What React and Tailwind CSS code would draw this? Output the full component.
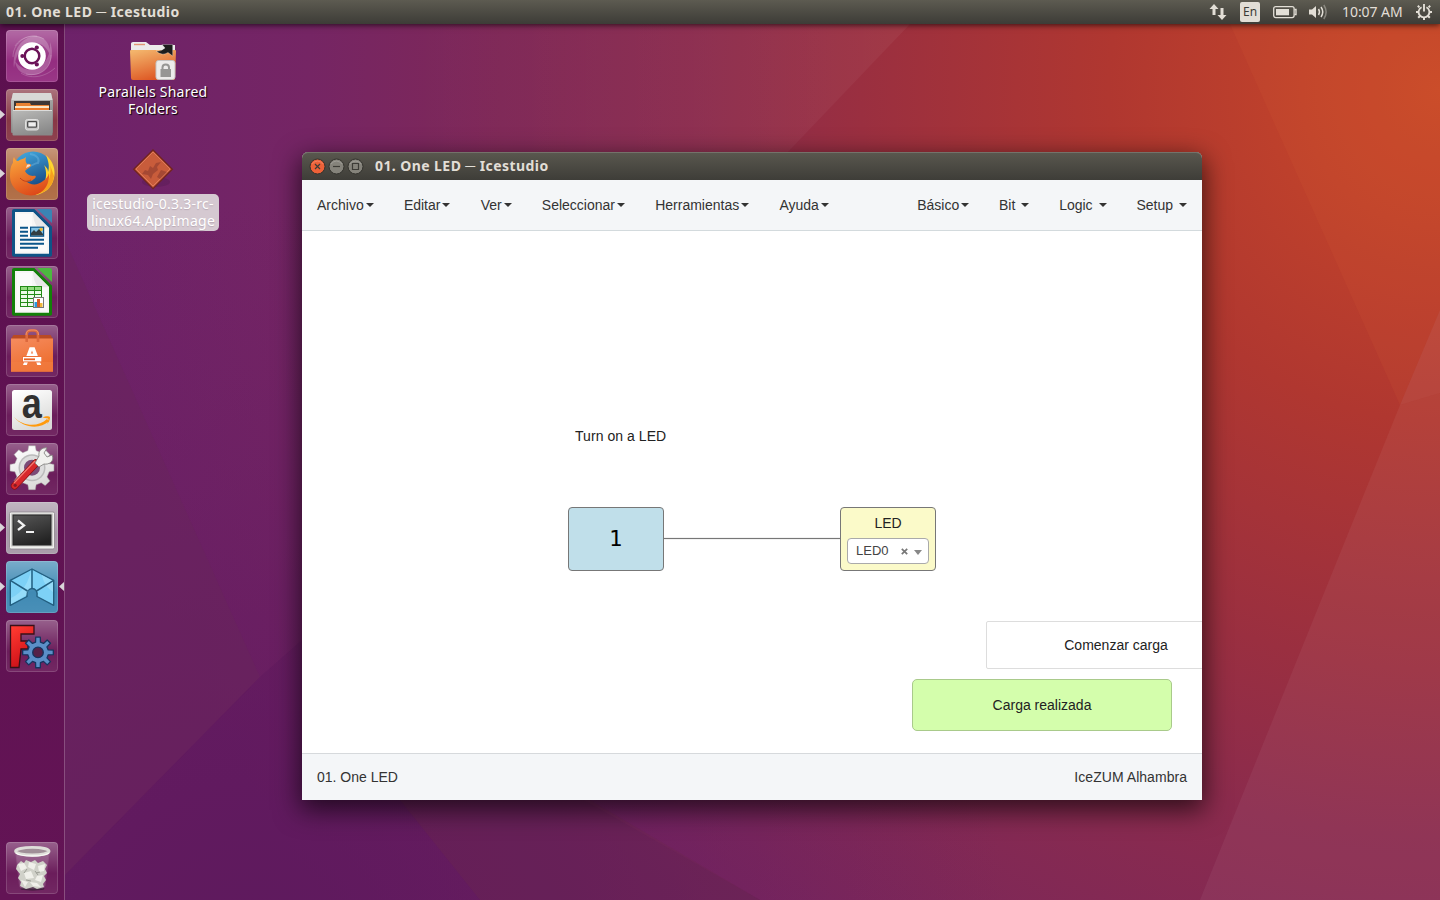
import React from "react";

const gearPath = (cx, cy, outer, inner, teeth) => {
  const points = [];
  const step = (Math.PI * 2) / teeth;
  for (let i = 0; i < teeth; i++) {
    const a = i * step - Math.PI / 2;
    [[-0.3, inner], [-0.19, outer], [0.19, outer], [0.3, inner]].forEach(([o, r]) => {
      points.push(`${(cx + r * Math.cos(a + o * step)).toFixed(2)},${(cy + r * Math.sin(a + o * step)).toFixed(2)}`);
    });
  }
  return `M${points.join("L")}Z`;
};

function Wallpaper() {
  return (
    <svg className="absolute inset-0" width="1440" height="900" viewBox="0 0 1440 900">
      <defs>
        <radialGradient id="warm" gradientUnits="userSpaceOnUse" cx="1440" cy="90" r="1380">
          <stop offset="0" stopColor="#c94a29" />
          <stop offset="0.1" stopColor="#c0422b" />
          <stop offset="0.24" stopColor="#b03730" />
          <stop offset="0.42" stopColor="#9a2f40" />
          <stop offset="0.54" stopColor="#8b2b4d" />
          <stop offset="0.68" stopColor="#7f2857" />
          <stop offset="0.82" stopColor="#752564" />
          <stop offset="1" stopColor="#6d226a" />
        </radialGradient>
        <radialGradient id="low" gradientUnits="userSpaceOnUse" cx="250" cy="960" r="760">
          <stop offset="0" stopColor="#5f195b" stopOpacity="0.75" />
          <stop offset="0.45" stopColor="#641b5c" stopOpacity="0.5" />
          <stop offset="1" stopColor="#6a1f5c" stopOpacity="0" />
        </radialGradient>
        <linearGradient id="fade" x1="0" y1="0" x2="1" y2="0">
          <stop offset="0" stopColor="#fff" stopOpacity="0" />
          <stop offset="1" stopColor="#fff" stopOpacity="0.045" />
        </linearGradient>
      </defs>
      <rect width="1440" height="900" fill="url(#warm)" />
      <rect width="1440" height="900" fill="url(#low)" />
      <path d="M65 240L260 677L65 875Z" fill="#68255a" opacity="0.45" />
      <path d="M260 677L65 875V900H760L302 640Z" fill="#4a0f55" opacity="0.14" />
      <path d="M590 800L760 900H480L400 800Z" fill="#6c2a48" opacity="0.28" />
      <path d="M910 24L680 265H400V24Z" fill="url(#fade)" />
      <path d="M1230 24L1400 405L1440 310V24Z" fill="#e4703a" opacity="0.1" />
      <path d="M1440 310L1400 405L1440 393Z" fill="#fff" opacity="0.07" />
      <path d="M1400 405L1200 900H1440V393Z" fill="#fff" opacity="0.05" />
    </svg>
  );
}

function UbuntuIcon() {
  return (
    <g>
      <path d="M8 38C6 20 16 7 29 6C40 6 45 16 44 26C41 15 32 12 25 13C14 15 10 26 8 38ZM44 12C50 28 42 43 28 45C18 46 10 41 9 31C15 40 24 41 31 38C40 34 45 24 44 12Z" fill="#fff" opacity="0.22" />
      <path d="M7 27C7 14 18 5 31 6M45 25C45 38 35 47 20 44M15 43C24 49 38 48 49 38M38 9C27 3 15 7 9 16" fill="none" stroke="#fff" strokeWidth="0.7" opacity="0.28" />
      <circle cx="26" cy="26" r="13.8" fill="#fff" />
      <circle cx="26" cy="26" r="7.2" fill="none" stroke="#6b1358" strokeWidth="2.7" />
      <path d="M18 26H14M30 19L32 15.7M30 33L32 36.3" stroke="#fff" strokeWidth="6" />
      <circle cx="26" cy="26" r="5.8" fill="#fff" />
      <circle cx="16.4" cy="26" r="2.1" fill="#6b1358" />
      <circle cx="30.8" cy="17.6" r="2.1" fill="#6b1358" />
      <circle cx="30.8" cy="34.4" r="2.1" fill="#6b1358" />
    </g>
  );
}

function FilesIcon() {
  return (
    <g>
      <path d="M7 4H45L47 12V43Q47 44 46 44H6Q5 44 5 43V12Z" fill="url(#metal)" />
      <path d="M7 4H45L46.5 11H5.5Z" fill="#d8d8d6" />
      <rect x="8" y="12" width="36" height="10" fill="#3d3735" />
      <path d="M10 14H24L25 16H43V23H10Z" fill="#e98232" />
      <path d="M9 17H43V20H9Z" fill="#fbe6c5" />
      <path d="M9 19H43V23H9Z" fill="#ec7c2b" />
      <rect x="6.5" y="21" width="40" height="25.5" rx="1" fill="url(#metal2)" />
      <path d="M7 21.5H46" stroke="#dcdcdb" />
      <rect x="19.5" y="30.5" width="13" height="10.5" rx="2" fill="#c6c6c5" stroke="#e0e0df" />
      <rect x="21.7" y="32.7" width="8.8" height="5.4" rx="0.7" fill="#eee" stroke="#4c4c4c" strokeWidth="1.3" />
    </g>
  );
}

function FirefoxIcon() {
  return (
    <g>
      <circle cx="27" cy="24" r="20.5" fill="url(#globe)" />
      <path d="M24 6C31 7 34 11 32 15C28 15 27 18 23 18" fill="none" stroke="#76bce7" strokeWidth="2" opacity="0.4" />
      <path d="M40 7C47 13 50 22 48 30C46 40 38 46 29 47C34 43 38 39 39 33C41 27 40 21 38 17C41 20 42 21 42 24C44 18 42 12 40 7Z" fill="#ffd52e" />
      <path d="M44 17C46 25 43 35 37 41L30 46C40 45 47 38 48 28Z" fill="#f6a01e" />
      <path d="M8 9C9 12 11 13 12 13C15 11 18 11 20 9C19 13 20 14 21 16C24 15 26 17 25 18C24 20 20 21 19 23C20 25 23 28 27 28C30 27 31 29 28 31C25 34 22 34 20 33C24 37 31 38 37 33C40 31 42 29 43 25C44 37 37 47 25 47.5C13 47 4 39 4 28C4 21 5 17 7 15C7 12 7 11 8 9Z" fill="url(#fox)" />
      <path d="M14 30C18 34 21 34 25 32" fill="none" stroke="#bf421b" strokeWidth="1" />
      <path d="M21 17C23 16 25 17 24 18L20 20Z" fill="#f9dfcd" />
    </g>
  );
}

function DocumentShape({ dark, light }) {
  return (
    <g>
      <path d="M8 2H28.3L46 19.7V48Q46 49.7 44 49.7H8Q6 49.7 6 48V4Q6 2 8 2Z" fill={dark} />
      <path d="M31 2H44Q46 2 46 4V16Z" fill={light} />
      <path d="M9 5H27L43 21V46.7H9Z" fill="#f6f6f5" />
      <path d="M11 7H26V22H41V44.7H11Z" fill="#fff" opacity="0.5" />
      <path d="M27 5L43 21H32Q27 15 27 5Z" fill="#e8e8e8" />
    </g>
  );
}

function WriterIcon() {
  return (
    <g>
      <DocumentShape dark="#0e5487" light="#3a84b4" />
      <path d="M14 20.7H22M14 24.7H22M14 28.7H22M14 32.7H38M14 36.7H38M14 40.7H32" stroke="#0b568a" strokeWidth="2" />
      <rect x="24.6" y="20.2" width="13" height="9" fill="#83c3e5" stroke="#0b568a" strokeWidth="1.2" />
      <circle cx="35" cy="22.5" r="1.8" fill="#f1bd35" />
      <path d="M25 28.6V26L28 23L30 25L33 22L37 27V28.6Z" fill="#333e42" />
    </g>
  );
}

function CalcIcon() {
  return (
    <g>
      <DocumentShape dark="#138009" light="#4cb83f" />
      <rect x="14" y="20" width="22" height="21" fill="#238b17" />
      <path d="M15 21H21V24H15ZM22 21H28V24H22ZM29 21H35V24H29Z" fill="#94dc80" />
      <path d="M15 25H21V28H15ZM22 25H28V28H22ZM29 25H35V28H29ZM15 29H21V32H15ZM22 29H28V32H22ZM29 29H35V32H29ZM15 33H21V36H15ZM22 33H28V36H22ZM15 37H21V40H15ZM22 37H28V40H22Z" fill="#edfbe9" />
      <rect x="27.5" y="31.5" width="10" height="10" fill="#fff" stroke="#777" />
      <path d="M28.5 36H31V41H28.5Z" fill="#2999de" />
      <path d="M31 33H34V41H31Z" fill="#d65a25" />
      <path d="M34 37H36.5V41H34Z" fill="#f0b83b" />
    </g>
  );
}

function SoftwareIcon() {
  return (
    <g>
      <path d="M5 14L7.5 10H44.5L47 14Z" fill="#b94a24" />
      <path d="M5 13.5H47V46.7H5Z" fill="url(#bag)" />
      <path d="M5 37H47V46.7H5Z" fill="#f28046" opacity="0.55" />
      <path d="M20.7 17V10Q20.7 5.5 25 5.5H28Q32 5.5 32 10V17" fill="none" stroke="#dd693d" strokeWidth="2.6" />
      <path d="M20 10Q20 5 25 5H28Q32.5 5 32.5 10" fill="none" stroke="#f49a72" strokeWidth="0.8" />
      <path d="M23.6 22.3H28.6L35.2 40H31.3L26 25.4L20.8 40H17Z" fill="#fff" />
      <path d="M16 31H36V37.4H16Z" fill="#ee7138" />
      <path d="M17 32H35.3V36.4H17Z" fill="#fff" />
      <path d="M18 33.4H29V35.2H18Z" fill="#e76328" />
      <path d="M23 28.5H29V31H22.2Z" fill="#fff" />
    </g>
  );
}

function AmazonIcon() {
  return (
    <g>
      <rect x="6" y="6" width="40" height="40" rx="2.5" fill="url(#paper)" />
      <text transform="translate(25.8 34) scale(0.84 1)" textAnchor="middle" fontSize="43" fontWeight="700" fontFamily="Liberation Sans, Arial, sans-serif" fill="#303030">a</text>
      <path d="M8 33C17 43 33 43 41 35L43 37C34 46 17 44 8 33Z" fill="#ff9a0b" />
      <path d="M36.5 33.5C40 31.5 43 32 44 33C44 36 43 38 41 40C42 37 43 35 42 34.5C40 34 38 34 36.5 33.5Z" fill="#ff9a0b" />
    </g>
  );
}

function SettingsIcon() {
  return (
    <g>
      <path d={gearPath(26, 24.7, 22.2, 17.6, 8)} fill="url(#paper)" stroke="#a7a7a5" strokeWidth="0.5" />
      <circle cx="26" cy="24.7" r="13.5" fill="#bbb" />
      <circle cx="26" cy="24.7" r="12" fill="#ddd" />
      <circle cx="26" cy="24.7" r="8" fill="#7b4b77" />
      <path d="M8.7 42.8L30 20" stroke="#8b0d12" strokeWidth="7.4" strokeLinecap="round" />
      <path d="M8.7 42.8L30 20" stroke="#d8282c" strokeWidth="6" strokeLinecap="round" />
      <path d="M8 40L29 18" stroke="#f27a73" strokeWidth="1.2" />
      <circle cx="9.2" cy="42.3" r="1.6" fill="#871b23" />
      <path d="M29 20L33 13C32 8 36 4 41 5L38 10L41 14L46 12C49 18 43 22 38 21L33 24Z" fill="#f1f1ee" stroke="#878783" strokeWidth="0.9" />
    </g>
  );
}

function TerminalIcon() {
  return (
    <g>
      <rect x="3.5" y="10" width="45" height="37" rx="1.5" fill="#f0f0ee" stroke="#8b858a" strokeWidth="0.8" />
      <rect x="5" y="11.5" width="42" height="33" fill="#cbcbc8" />
      <rect x="7" y="13" width="38" height="30" fill="url(#screen)" stroke="#252525" />
      <path d="M12 18.5L18 23.4L12 28" fill="none" stroke="#f2f2f2" strokeWidth="2.3" />
      <path d="M20 30H28" stroke="#f2f2f2" strokeWidth="2" />
    </g>
  );
}

function IcestudioIcon() {
  return (
    <g strokeLinejoin="round">
      <path d="M26 8L47.7 19.3V44.3L31 35.5C32 30 29 27.5 26 27.5C23 27.5 20 30 21 35.5L4.3 44.3V19.3Z" fill="#7dd1f6" stroke="#235f80" strokeWidth="1.4" />
      <path d="M25 9V27C22 28 21 31 20.5 34L5 43V37C17 32 23 20 25 9ZM36 14L47 20V31C40 26 37 20 36 14Z" fill="#a5e2fc" opacity="0.6" />
      <path d="M26 8V27.5M4.3 19.3L21.5 30M47.7 19.3L30.5 30" fill="none" stroke="#235f80" strokeWidth="1.5" />
    </g>
  );
}

function FreecadIcon() {
  return (
    <g>
      <path d="M4.5 5.5H28V14H15V21H22V29H15L13 47.5H4.5Z" fill="url(#red)" stroke="#381019" strokeWidth="1.3" />
      <path d={gearPath(32, 32.4, 15.5, 10.5, 8)} fill="#5b8fc8" stroke="#16345f" strokeWidth="1.3" strokeLinejoin="round" />
      <circle cx="32" cy="32.4" r="5.3" fill="#552148" stroke="#16345f" strokeWidth="1.3" />
    </g>
  );
}

function TrashIcon() {
  return (
    <g>
      <ellipse cx="26.5" cy="46.8" rx="12" ry="1.7" fill="#2e162c" opacity="0.8" />
      <path d="M10 12H43L39 44Q38 47 34 47H18Q14 47 13.5 44Z" fill="#fff" opacity="0.16" stroke="#e3cde1" strokeWidth="0.8" />
      <path d="M11 23L15 19L18 21L20 18L25 20L29 18L32 21L37 19L41 23L39 27L41 31L38 34L40 38L37 42L38 45L31 47L27 45L20 47L14 44L15 40L12 36L14 32L10 27Z" fill="#d0d1c9" />
      <path d="M12 22L18 21L21 26L15 29ZM23 20L30 22L28 28L22 25ZM32 24L39 22L38 29L33 30ZM18 31L25 29L28 36L20 37ZM31 34L37 33L35 40L29 38ZM15 38L22 40L19 45ZM24 40L31 41L35 45L27 44Z" fill="#f0f0ea" />
      <path d="M21 27L18 31M29 29L32 33M20 38L25 39M34 30L30 31" stroke="#9c9e95" />
      <ellipse cx="26.3" cy="9.2" rx="16.7" ry="3.8" fill="#a08f98" stroke="#deded9" strokeWidth="2.9" />
      <path d="M10 11C15 15 37 15 43 11" fill="none" stroke="#f8f8f5" strokeWidth="1.3" />
    </g>
  );
}

const launcher = [
  { name: "ubuntu", Icon: UbuntuIcon, tile: "bg-[#942d80]" },
  { name: "files", Icon: FilesIcon, tile: "bg-[#883846]", running: true },
  { name: "firefox", Icon: FirefoxIcon, tile: "bg-[#ae6a41]", running: true },
  { name: "writer", Icon: WriterIcon, tile: "bg-[#6b1d5b]" },
  { name: "calc", Icon: CalcIcon, tile: "bg-[#6b1d5b]" },
  { name: "software", Icon: SoftwareIcon, tile: "bg-[#6b1d5b]" },
  { name: "amazon", Icon: AmazonIcon, tile: "bg-[#6b1d5b]" },
  { name: "settings", Icon: SettingsIcon, tile: "bg-[#6b1d5b]" },
  { name: "terminal", Icon: TerminalIcon, tile: "bg-[#a698a7]", running: true },
  { name: "icestudio", Icon: IcestudioIcon, tile: "bg-[#408ab4]", running: true, focused: true },
  { name: "freecad", Icon: FreecadIcon, tile: "bg-[#6b1d5b]" },
];

function SharedGradients() {
  const pairs = [
    ["metal", "#c4c4c2", "#777"],
    ["metal2", "#b7b7b5", "#888"],
    ["globe", "#42a9df", "#123d79"],
    ["fox", "#f9a33b", "#dd4819"],
    ["bag", "#f58a5c", "#ed6c2b"],
    ["paper", "#fff", "#d9d9d7"],
    ["screen", "#555", "#222"],
    ["red", "#ff3a31", "#c90d16"],
    ["folder", "#f3b46b", "#dd5421"],
  ];
  return (
    <svg className="absolute" width="0" height="0">
      <defs>
        {pairs.map(([id, from, to]) => (
          <linearGradient key={id} id={id} x1="0.2" y1="0" x2="0.6" y2="1">
            <stop stopColor={from} />
            <stop offset="1" stopColor={to} />
          </linearGradient>
        ))}
      </defs>
    </svg>
  );
}

function Tile({ Icon, tile, running, focused }) {
  return (
    <div className="relative flex w-full justify-center pr-px">
      {running && <svg className="absolute top-[21px] left-0" width="5" height="9"><path d="M0 0L5 4.5L0 9Z" fill="#d9d4d8" /></svg>}
      <div className={`h-[52px] w-[52px] rounded-[4px] bg-linear-to-b from-white/30 via-transparent via-60% to-white/5 shadow-[inset_0_0_0_1px_rgba(255,255,255,0.15)] ${tile}`}>
        <svg className="overflow-visible" width="52" height="52" viewBox="0 0 52 52"><Icon /></svg>
      </div>
      {focused && <svg className="absolute top-[21px] right-0" width="6" height="9"><path d="M6 0L1 4.5L6 9Z" fill="#d9d4d8" /></svg>}
    </div>
  );
}

function TopBar() {
  return (
    <header className="relative z-10 flex h-6 items-center justify-between bg-linear-to-b from-[#5d5b51] to-[#3d3c37] text-[#e2ded6] shadow-[0_1px_6px_rgba(0,0,0,0.7)]">
      <span className="pl-1.5 font-['Noto_Sans',sans-serif] text-[14px] leading-6 font-bold whitespace-nowrap tracking-[0.42px]">01. One LED ─ Icestudio</span>
      <div className="flex h-6 items-center pr-[7px]">
        <svg width="18" height="18" viewBox="0 0 18 18" fill="#e2ded6"><path d="M5 1L9.5 6H6.5V12H3.5V6H.5ZM13 17L8.5 12H11.5V5H14.5V12H17.5Z" /></svg>
        <span className="ml-[13px] flex h-5 w-5 items-center justify-center rounded-[2px] bg-[#e2ded6] font-['Noto_Sans',sans-serif] text-[12px] text-[#3d3c37]">En</span>
        <svg className="ml-[13px]" width="24" height="14" viewBox="0 0 24 14"><rect x=".7" y="1.6" width="20.4" height="11" rx="2" fill="none" stroke="#e2ded6" strokeWidth="1.3" /><path d="M3 4H16V10.3H3Z" fill="#e2ded6" /><path d="M21.5 4.5H23V9.5H21.5" fill="none" stroke="#e2ded6" strokeWidth="1.4" /></svg>
        <svg className="ml-3" width="20" height="18" viewBox="0 0 20 18" fill="none" stroke="#e2ded6" strokeWidth="1.5"><path d="M0 6.5H3L7 3V15L3 11.5H0Z" fill="#e2ded6" stroke="none" /><path d="M9.5 6Q11.5 9 9.5 12" /><path d="M12 4Q15.5 9 12 14" /><path d="M14.8 2Q19.5 9 14.8 16" opacity="0.4" /></svg>
        <span className="ml-[13px] w-[62px] font-['Noto_Sans',sans-serif] text-[14px] leading-6 whitespace-nowrap tracking-[-0.05px]">10:07 AM</span>
        <svg className="ml-[11px]" width="18" height="18" viewBox="0 0 18 18" fill="none" stroke="#e2ded6"><path d="M6.6 4.2A5.4 5.4 0 1 0 11.4 4.2" strokeWidth="1.8" /><path d="M9 1V8.5" strokeWidth="1.9" /><path d="M4.4 4.4L2.8 2.8M13.6 4.4L15.2 2.8M3.5 9H1M14.5 9H17M5 13L3.2 14.8M13 13L14.8 14.8M9 14.5V17" strokeWidth="2" /></svg>
      </div>
    </header>
  );
}

function Launcher() {
  return (
    <nav className="flex w-[65px] flex-col justify-between border-r border-white/25 bg-linear-to-b from-[#5c104f] to-[#631455] pt-1.5 pb-1.5">
      <div className="flex flex-col gap-[7px]">
        {launcher.map((item) => <Tile key={item.name} {...item} />)}
      </div>
      <Tile Icon={TrashIcon} tile="bg-[#6b1d5b]" />
    </nav>
  );
}

function DesktopIcons() {
  return (
    <div className="flex w-[132px] flex-col items-center pt-[18px] text-center font-['Noto_Sans',sans-serif] text-[14px] leading-[17px] text-white">
      <svg className="ml-0.5" width="48" height="39" viewBox="0 0 48 39">
        <path d="M1 1.5Q1 0 3 0H16L20 3H45V20H1Z" fill="#ecebea" />
        <path d="M4 2.5H15" stroke="#e29573" strokeWidth="1.4" />
        <path d="M0 9Q0 8 1 8H45Q46 8 46 9L45 37Q45 38 43 38H3Q1 38 1 36Z" fill="url(#folder)" />
        <path d="M26 9Q32 14.5 38 10.5L42.7 14V2.5H32L35 6Q31 10 26 9Z" fill="#1d1d1d" stroke="#fff" strokeOpacity="0.5" strokeWidth="0.6" />
        <rect x="26" y="18.5" width="19" height="19" rx="2.5" fill="#ecebea" stroke="#c4c3c2" />
        <path d="M30.5 27H41V35H30.5Z" fill="#969694" />
        <path d="M32.5 28V25.5Q32.5 22.5 35.7 22.5Q39 22.5 39 25.5V28" fill="none" stroke="#969694" strokeWidth="2" />
      </svg>
      <div className="mt-[2px] tracking-[0.25px] whitespace-nowrap [text-shadow:1px_1px_1px_#000]">Parallels Shared<br />Folders</div>
      <svg className="mt-[31px]" width="44" height="44" viewBox="0 0 44 44">
        <ellipse cx="25" cy="34" rx="14" ry="5" fill="#35103a" opacity="0.18" />
        <path d="M22 2L41.3 21.3L22 40.6L2.7 21.3Z" fill="#c85c3b" stroke="#70241e" strokeWidth="1.3" />
        <path d="M22 4L39 21L22 38L5 21Z" fill="none" stroke="#e4835f" strokeWidth="0.8" />
        <path d="M11 26L14 22L17 23L19 18L22 20L25 15L30 14L26 19L27 22L22 26L20 31L17 27ZM26 29L30 22L36 24L29 31Z" fill="#923d30" opacity="0.65" />
      </svg>
      <div className="mt-[2px] h-[37px] w-[132px] rounded-[5px] bg-[#d5c9d1] pt-[1px] tracking-[0.26px] whitespace-nowrap [text-shadow:0_1px_1px_#b9aab5]">icestudio-0.3.3-rc-<br />linux64.AppImage</div>
    </div>
  );
}

function Caret({ spaced }) {
  return (
    <svg className={spaced ? "ml-1.5" : "ml-0.5"} width="8" height="4"><path d="M0 0H8L4 4Z" fill="#333" /></svg>
  );
}

function Menu({ items, spaced }) {
  return items.map((label) => (
    <span key={label} className="flex items-center whitespace-nowrap">
      {label}
      <Caret spaced={spaced && label !== "Básico"} />
    </span>
  ));
}

function WindowButton({ close, d }) {
  return (
    <svg width="17" height="17" viewBox="0 0 17 17">
      <circle cx="8.5" cy="8.5" r="7.5" fill={close ? "#ed6138" : "#85837b"} stroke="#33322d" strokeWidth="1" />
      <path d="M3 6Q8.5 0 14 6" fill="none" stroke="#fff" opacity="0.2" />
      <path d={d} fill="none" stroke="#3d3c37" strokeWidth="1.2" />
    </svg>
  );
}

function AppWindow() {
  return (
    <main className="absolute top-[128px] left-[237px] flex h-[648px] w-[900px] flex-col rounded-t-[6px] bg-white font-['Liberation_Sans',Arial,sans-serif] text-[14px] text-[#333] shadow-[0_8px_26px_2px_rgba(0,0,0,0.65)]">
      <div className="flex h-7 shrink-0 items-center rounded-t-[6px] bg-linear-to-b from-[#5a584f] to-[#3e3d38] pl-[7px] shadow-[inset_0_1px_0_#74726a]">
        <div className="flex gap-0.5">
          <WindowButton close d="M6 6L11 11M11 6L6 11" />
          <WindowButton d="M5 8.5H12" />
          <WindowButton d="M5.5 5.5H11.5V11.5H5.5Z" />
        </div>
        <span className="ml-[11px] font-['Noto_Sans',sans-serif] text-[14px] leading-7 font-bold tracking-[0.42px] whitespace-nowrap text-[#e2ded6]">01. One LED ─ Icestudio</span>
      </div>
      <div className="flex h-[51px] shrink-0 items-center justify-between border-b border-[#d3dadd] bg-[#f4f6f8] px-[15px]">
        <div className="flex gap-[30.2px]"><Menu items={["Archivo", "Editar", "Ver", "Seleccionar", "Herramientas", "Ayuda"]} /></div>
        <div className="flex gap-[29.8px]"><Menu spaced items={["Básico", "Bit", "Logic", "Setup"]} /></div>
      </div>
      <section className="relative min-h-0 flex-1 overflow-hidden bg-white text-[#222]">
        <span className="absolute top-[195px] left-[273px] leading-5 tracking-[0.05px]">Turn on a LED</span>
        <div className="absolute top-[307px] left-[361px] h-px w-[178px] bg-[#777] shadow-[0_0_1px_#777]" />
        <div className="absolute top-[276px] left-[266px] flex h-16 w-24 items-center justify-center rounded-[4px] border border-[#777] bg-[#c0dfea] pr-px pb-0.5 font-['DejaVu_Sans_Mono',monospace] text-[22px] text-black">1</div>
        <div className="absolute top-[276px] left-[538px] flex h-16 w-24 flex-col items-center rounded-[4px] border border-[#777] bg-[#fbfac9]">
          <span className="mt-[5px] leading-5">LED</span>
          <div className="mt-[5px] flex h-[26px] w-[82px] items-center rounded-[4px] border border-[#aaa] bg-white pl-2 text-[13px] text-[#444]">
            LED0
            <svg className="ml-[12px]" width="7" height="7"><path d="M.8.8L6.2 6.2M6.2.8L.8 6.2" stroke="#777" strokeWidth="1.7" /></svg>
            <svg className="mt-[3px] ml-1.5" width="8" height="5"><path d="M0 0H8L4 5Z" fill="#888" /></svg>
          </div>
        </div>
        <div className="absolute top-[390px] left-[684px] flex h-12 w-[260px] items-center justify-center rounded-[2px] border border-[#ddd] bg-white">Comenzar carga</div>
        <div className="absolute top-[448px] left-[610px] flex h-[52px] w-[260px] items-center justify-center rounded-[5px] border border-[#a9ca8b] bg-[#d4feac]">Carga realizada</div>
      </section>
      <footer className="flex h-[47px] shrink-0 items-center justify-between border-t border-[#d6d9dc] bg-[#f4f6f8] px-[15px]">
        <span>01. One LED</span><span className="tracking-[0.04px]">IceZUM Alhambra</span>
      </footer>
    </main>
  );
}

export default function App() {
  return (
    <div className="relative h-[900px] w-[1440px] overflow-hidden bg-[#702565]">
      <Wallpaper />
      <SharedGradients />
      <div className="relative flex h-full flex-col">
        <TopBar />
        <div className="flex min-h-0 flex-1">
          <Launcher />
          <div className="relative flex-1 pl-[22px]">
            <DesktopIcons />
            <AppWindow />
          </div>
        </div>
      </div>
    </div>
  );
}
